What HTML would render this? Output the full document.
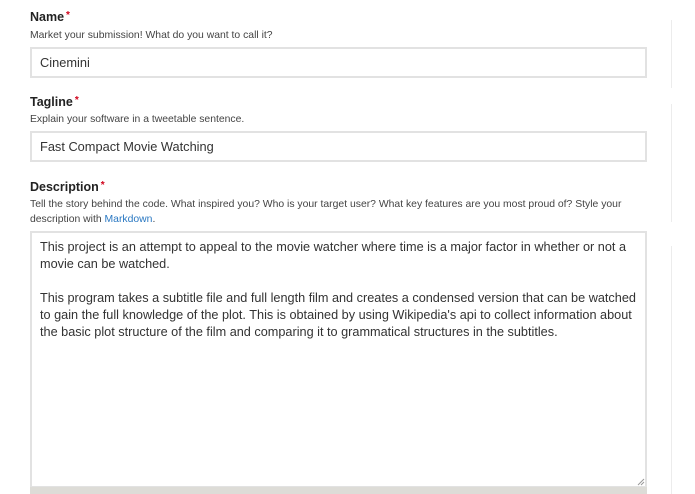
<!DOCTYPE html>
<html><head><style>
body{margin:0;width:695px;height:494px;background:#fff;font-family:"Liberation Sans",sans-serif;color:#333;position:relative;overflow:hidden}
.l{position:absolute;left:30px;font-weight:bold;font-size:12.5px;color:#222}
.l span{color:#d0021b;font-size:10px;vertical-align:top;margin-left:2px}
.h{position:absolute;left:30px;font-size:10.4px;color:#444;line-height:15px}
.i{position:absolute;left:30px;width:617px;border:2px solid #e2e2e2;background:#fff;font-size:12.8px;color:#333;box-sizing:border-box;padding-left:8px}
.vl{position:absolute;left:671px;width:1px;background:#ececec}
</style></head><body>
<div class="vl" style="top:20px;height:68px"></div>
<div class="vl" style="top:104px;height:118px"></div>
<div class="vl" style="top:246px;height:248px"></div>
<div class="l" style="top:10px">Name<span>*</span></div>
<div class="h" style="top:28px">Market your submission! What do you want to call it?</div>
<div class="i" style="top:47px;height:31px;line-height:27px">Cinemini</div>
<div class="l" style="top:95px">Tagline<span>*</span></div>
<div class="h" style="top:112px">Explain your software in a tweetable sentence.</div>
<div class="i" style="top:131px;height:31px;line-height:27px">Fast Compact Movie Watching</div>
<div class="l" style="top:180px">Description<span>*</span></div>
<div class="h" style="top:197px;width:616px">Tell the story behind the code. What inspired you? Who is your target user? What key features are you most proud of? Style your description with <span style="color:#2a78c2">Markdown</span>.</div>
<div class="i" style="top:231px;height:257px;padding:6px 8px;line-height:17px;font-size:12.7px">This project is an attempt to appeal to the movie watcher where time is a major factor in whether or not a movie can be watched.<br><br>This program takes a subtitle file and full length film and creates a condensed version that can be watched to gain the full knowledge of the plot. This is obtained by using Wikipedia's api to collect information about the basic plot structure of the film and comparing it to grammatical structures in the subtitles.</div>
<div style="position:absolute;left:30px;top:487px;width:617px;height:7px;background:#dddcd7"></div>
<svg style="position:absolute;left:637px;top:478px" width="8" height="8"><path d="M1 7L7 1M4 7L7 4" stroke="#999" stroke-width="1"/></svg>
</body></html>
